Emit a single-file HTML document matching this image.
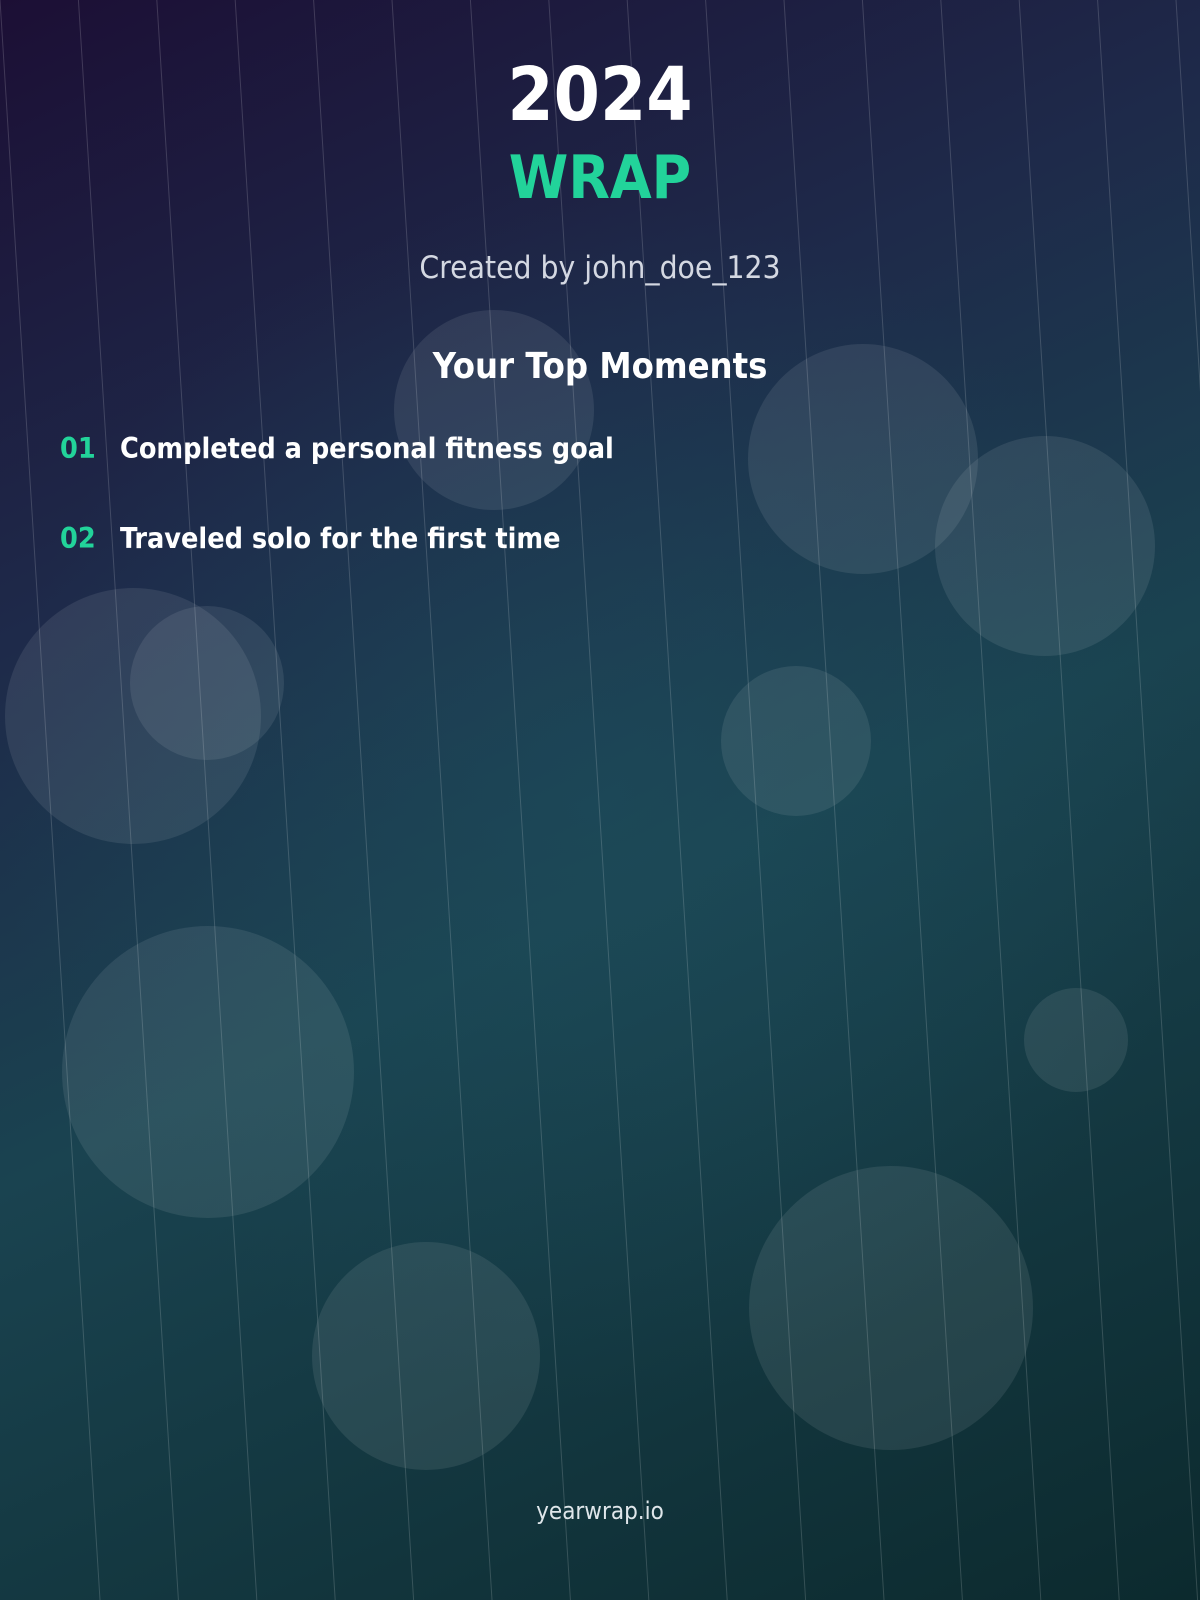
<!DOCTYPE html>
<html><head><meta charset="utf-8"><style>
html,body{margin:0;padding:0}
body{width:1200px;height:1600px;position:relative;overflow:hidden;font-family:"DejaVu Sans Condensed","DejaVu Sans",sans-serif;
background:radial-gradient(ellipse 600px 600px at 600px 800px,rgba(30,80,95,0.5),rgba(30,80,95,0) 100%),linear-gradient(155deg,#1c0f35 0%,#1e2a4a 30%,#1a4350 55%,#0c2a2e 100%);}
.c{position:absolute;border-radius:50%;background:rgba(255,255,255,0.085)}
svg{position:absolute;left:0;top:0}
.t{position:absolute;left:0;width:1200px;text-align:center;color:#fff}
.item{position:absolute;left:60px;font-weight:bold;font-size:28.5px;color:#fff;white-space:nowrap}
.item span{color:#22d39a;display:inline-block;width:60px}
</style></head><body>
<div class="c" style="left:394px;top:310px;width:200px;height:200px"></div>
<div class="c" style="left:748px;top:344px;width:230px;height:230px"></div>
<div class="c" style="left:935px;top:436px;width:220px;height:220px"></div>
<div class="c" style="left:5px;top:588px;width:256px;height:256px"></div>
<div class="c" style="left:130px;top:606px;width:154px;height:154px"></div>
<div class="c" style="left:721px;top:666px;width:150px;height:150px"></div>
<div class="c" style="left:62px;top:926px;width:292px;height:292px"></div>
<div class="c" style="left:1024px;top:988px;width:104px;height:104px"></div>
<div class="c" style="left:312px;top:1242px;width:228px;height:228px"></div>
<div class="c" style="left:749px;top:1166px;width:284px;height:284px"></div>
<svg width="1200" height="1600"><g stroke="rgba(255,255,255,0.16)" stroke-width="1">
<line x1="0" y1="0" x2="100" y2="1600"/><line x1="78.4" y1="0" x2="178.4" y2="1600"/><line x1="156.8" y1="0" x2="256.8" y2="1600"/><line x1="235.2" y1="0" x2="335.2" y2="1600"/><line x1="313.6" y1="0" x2="413.6" y2="1600"/><line x1="392" y1="0" x2="492" y2="1600"/><line x1="470.4" y1="0" x2="570.4" y2="1600"/><line x1="548.8" y1="0" x2="648.8" y2="1600"/><line x1="627.2" y1="0" x2="727.2" y2="1600"/><line x1="705.6" y1="0" x2="805.6" y2="1600"/><line x1="784" y1="0" x2="884" y2="1600"/><line x1="862.4" y1="0" x2="962.4" y2="1600"/><line x1="940.8" y1="0" x2="1040.8" y2="1600"/><line x1="1019.2" y1="0" x2="1119.2" y2="1600"/><line x1="1097.6" y1="0" x2="1197.6" y2="1600"/><line x1="1176" y1="0" x2="1276" y2="1600"/>
</g></svg>
<div class="t" style="top:52px;font-size:74px;font-weight:bold;line-height:86px">2024</div>
<div class="t" style="top:142px;font-size:60px;font-weight:bold;color:#22d39a;line-height:72px">WRAP</div>
<div class="t" style="top:248px;font-size:31.5px;color:#d4d8e2;line-height:40px">Created by john_doe_123</div>
<div class="t" style="top:344px;font-size:36px;font-weight:bold;line-height:46px">Your Top Moments</div>
<div class="item" style="top:432px"><span>01</span>Completed a personal fitness goal</div>
<div class="item" style="top:522px"><span>02</span>Traveled solo for the first time</div>
<div class="t" style="top:1496px;font-size:24px;color:#dfe6ea;line-height:30px">yearwrap.io</div>
</body></html>
